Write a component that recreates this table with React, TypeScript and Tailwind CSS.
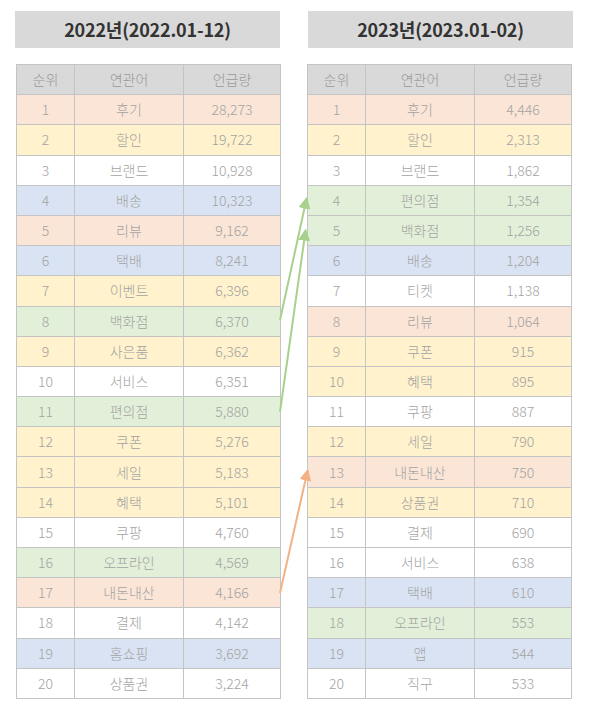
import React from "react";

type Row = [number, string, string, string];

const PEACH = "bg-[#fbe5d6]";
const YELLOW = "bg-[#fff2cc]";
const BLUE = "bg-[#dae3f3]";
const GREEN = "bg-[#e2f0d9]";
const WHITE = "bg-white";

const rows2022: Row[] = [
  [1, "후기", "28,273", PEACH],
  [2, "할인", "19,722", YELLOW],
  [3, "브랜드", "10,928", WHITE],
  [4, "배송", "10,323", BLUE],
  [5, "리뷰", "9,162", PEACH],
  [6, "택배", "8,241", BLUE],
  [7, "이벤트", "6,396", YELLOW],
  [8, "백화점", "6,370", GREEN],
  [9, "사은품", "6,362", YELLOW],
  [10, "서비스", "6,351", WHITE],
  [11, "편의점", "5,880", GREEN],
  [12, "쿠폰", "5,276", YELLOW],
  [13, "세일", "5,183", YELLOW],
  [14, "혜택", "5,101", YELLOW],
  [15, "쿠팡", "4,760", WHITE],
  [16, "오프라인", "4,569", GREEN],
  [17, "내돈내산", "4,166", PEACH],
  [18, "결제", "4,142", WHITE],
  [19, "홈쇼핑", "3,692", BLUE],
  [20, "상품권", "3,224", WHITE],
];

const rows2023: Row[] = [
  [1, "후기", "4,446", PEACH],
  [2, "할인", "2,313", YELLOW],
  [3, "브랜드", "1,862", WHITE],
  [4, "편의점", "1,354", GREEN],
  [5, "백화점", "1,256", GREEN],
  [6, "배송", "1,204", BLUE],
  [7, "티켓", "1,138", WHITE],
  [8, "리뷰", "1,064", PEACH],
  [9, "쿠폰", "915", YELLOW],
  [10, "혜택", "895", YELLOW],
  [11, "쿠팡", "887", WHITE],
  [12, "세일", "790", YELLOW],
  [13, "내돈내산", "750", PEACH],
  [14, "상품권", "710", YELLOW],
  [15, "결제", "690", WHITE],
  [16, "서비스", "638", WHITE],
  [17, "택배", "610", BLUE],
  [18, "오프라인", "553", GREEN],
  [19, "앱", "544", BLUE],
  [20, "직구", "533", WHITE],
];

function RankTable({ title, rows, shift }: { title: string; rows: Row[]; shift: string }) {
  return (
    <div className="w-[265px] flex flex-col">
      <div className="h-[37px] bg-[#d9d9d9] flex items-center justify-center text-[18px] font-bold text-[#333] tracking-[-0.2px]">
        {title}
      </div>
      <table className={`mt-[16px] ${shift} w-[265px] border-collapse table-fixed text-[14px] font-light text-[#a3a3a3]`}>
        <colgroup>
          <col className="w-[58px]" />
          <col className="w-[109px]" />
          <col className="w-[97px]" />
        </colgroup>
        <thead>
          <tr className="h-[30.2px] bg-[#d9d9d9] text-[#999]">
            <th className="border border-[#c4c4c4] font-light">순위</th>
            <th className="border border-[#c4c4c4] font-light">연관어</th>
            <th className="border border-[#c4c4c4] font-light">언급량</th>
          </tr>
        </thead>
        <tbody>
          {rows.map(([rank, word, count, bg]) => (
            <tr key={rank} className={`h-[30.2px] ${bg}`}>
              <td className="border border-[#c4c4c4] text-center p-0">{rank}</td>
              <td className="border border-[#c4c4c4] text-center p-0">{word}</td>
              <td className="border border-[#c4c4c4] text-center p-0">{count}</td>
            </tr>
          ))}
        </tbody>
      </table>
    </div>
  );
}

export default function App() {
  return (
    <div
      className="relative w-[589px] h-[709px] bg-white overflow-hidden"
      style={{ fontFamily: '"Noto Sans CJK KR", "Noto Sans", sans-serif' }}
    >
      <div className="flex gap-[28px] pl-[15px] pt-[11px]">
        <RankTable title="2022년(2022.01-12)" rows={rows2022} shift="ml-[1px]" />
        <RankTable title="2023년(2023.01-02)" rows={rows2023} shift="-ml-[1px]" />
      </div>

      {/* change arrows between the two years */}
      <svg className="absolute inset-0 pointer-events-none" width={589} height={709}>
        <defs>
          <marker id="headGreen" viewBox="0 0 10 10" refX="8" refY="5" markerWidth="6" markerHeight="6" orient="auto">
            <path d="M0 0 L10 5 L0 10 z" fill="#a9d18e" />
          </marker>
          <marker id="headOrange" viewBox="0 0 10 10" refX="8" refY="5" markerWidth="6" markerHeight="6" orient="auto">
            <path d="M0 0 L10 5 L0 10 z" fill="#f4b183" />
          </marker>
        </defs>
        <line x1={280} y1={320} x2={306.5} y2={199} stroke="#a9d18e" strokeWidth={2} markerEnd="url(#headGreen)" />
        <line x1={280} y1={412} x2={305.5} y2={231} stroke="#a9d18e" strokeWidth={2} markerEnd="url(#headGreen)" />
        <line x1={280} y1={593} x2={307.5} y2={471} stroke="#f4b183" strokeWidth={2} markerEnd="url(#headOrange)" />
      </svg>
    </div>
  );
}
